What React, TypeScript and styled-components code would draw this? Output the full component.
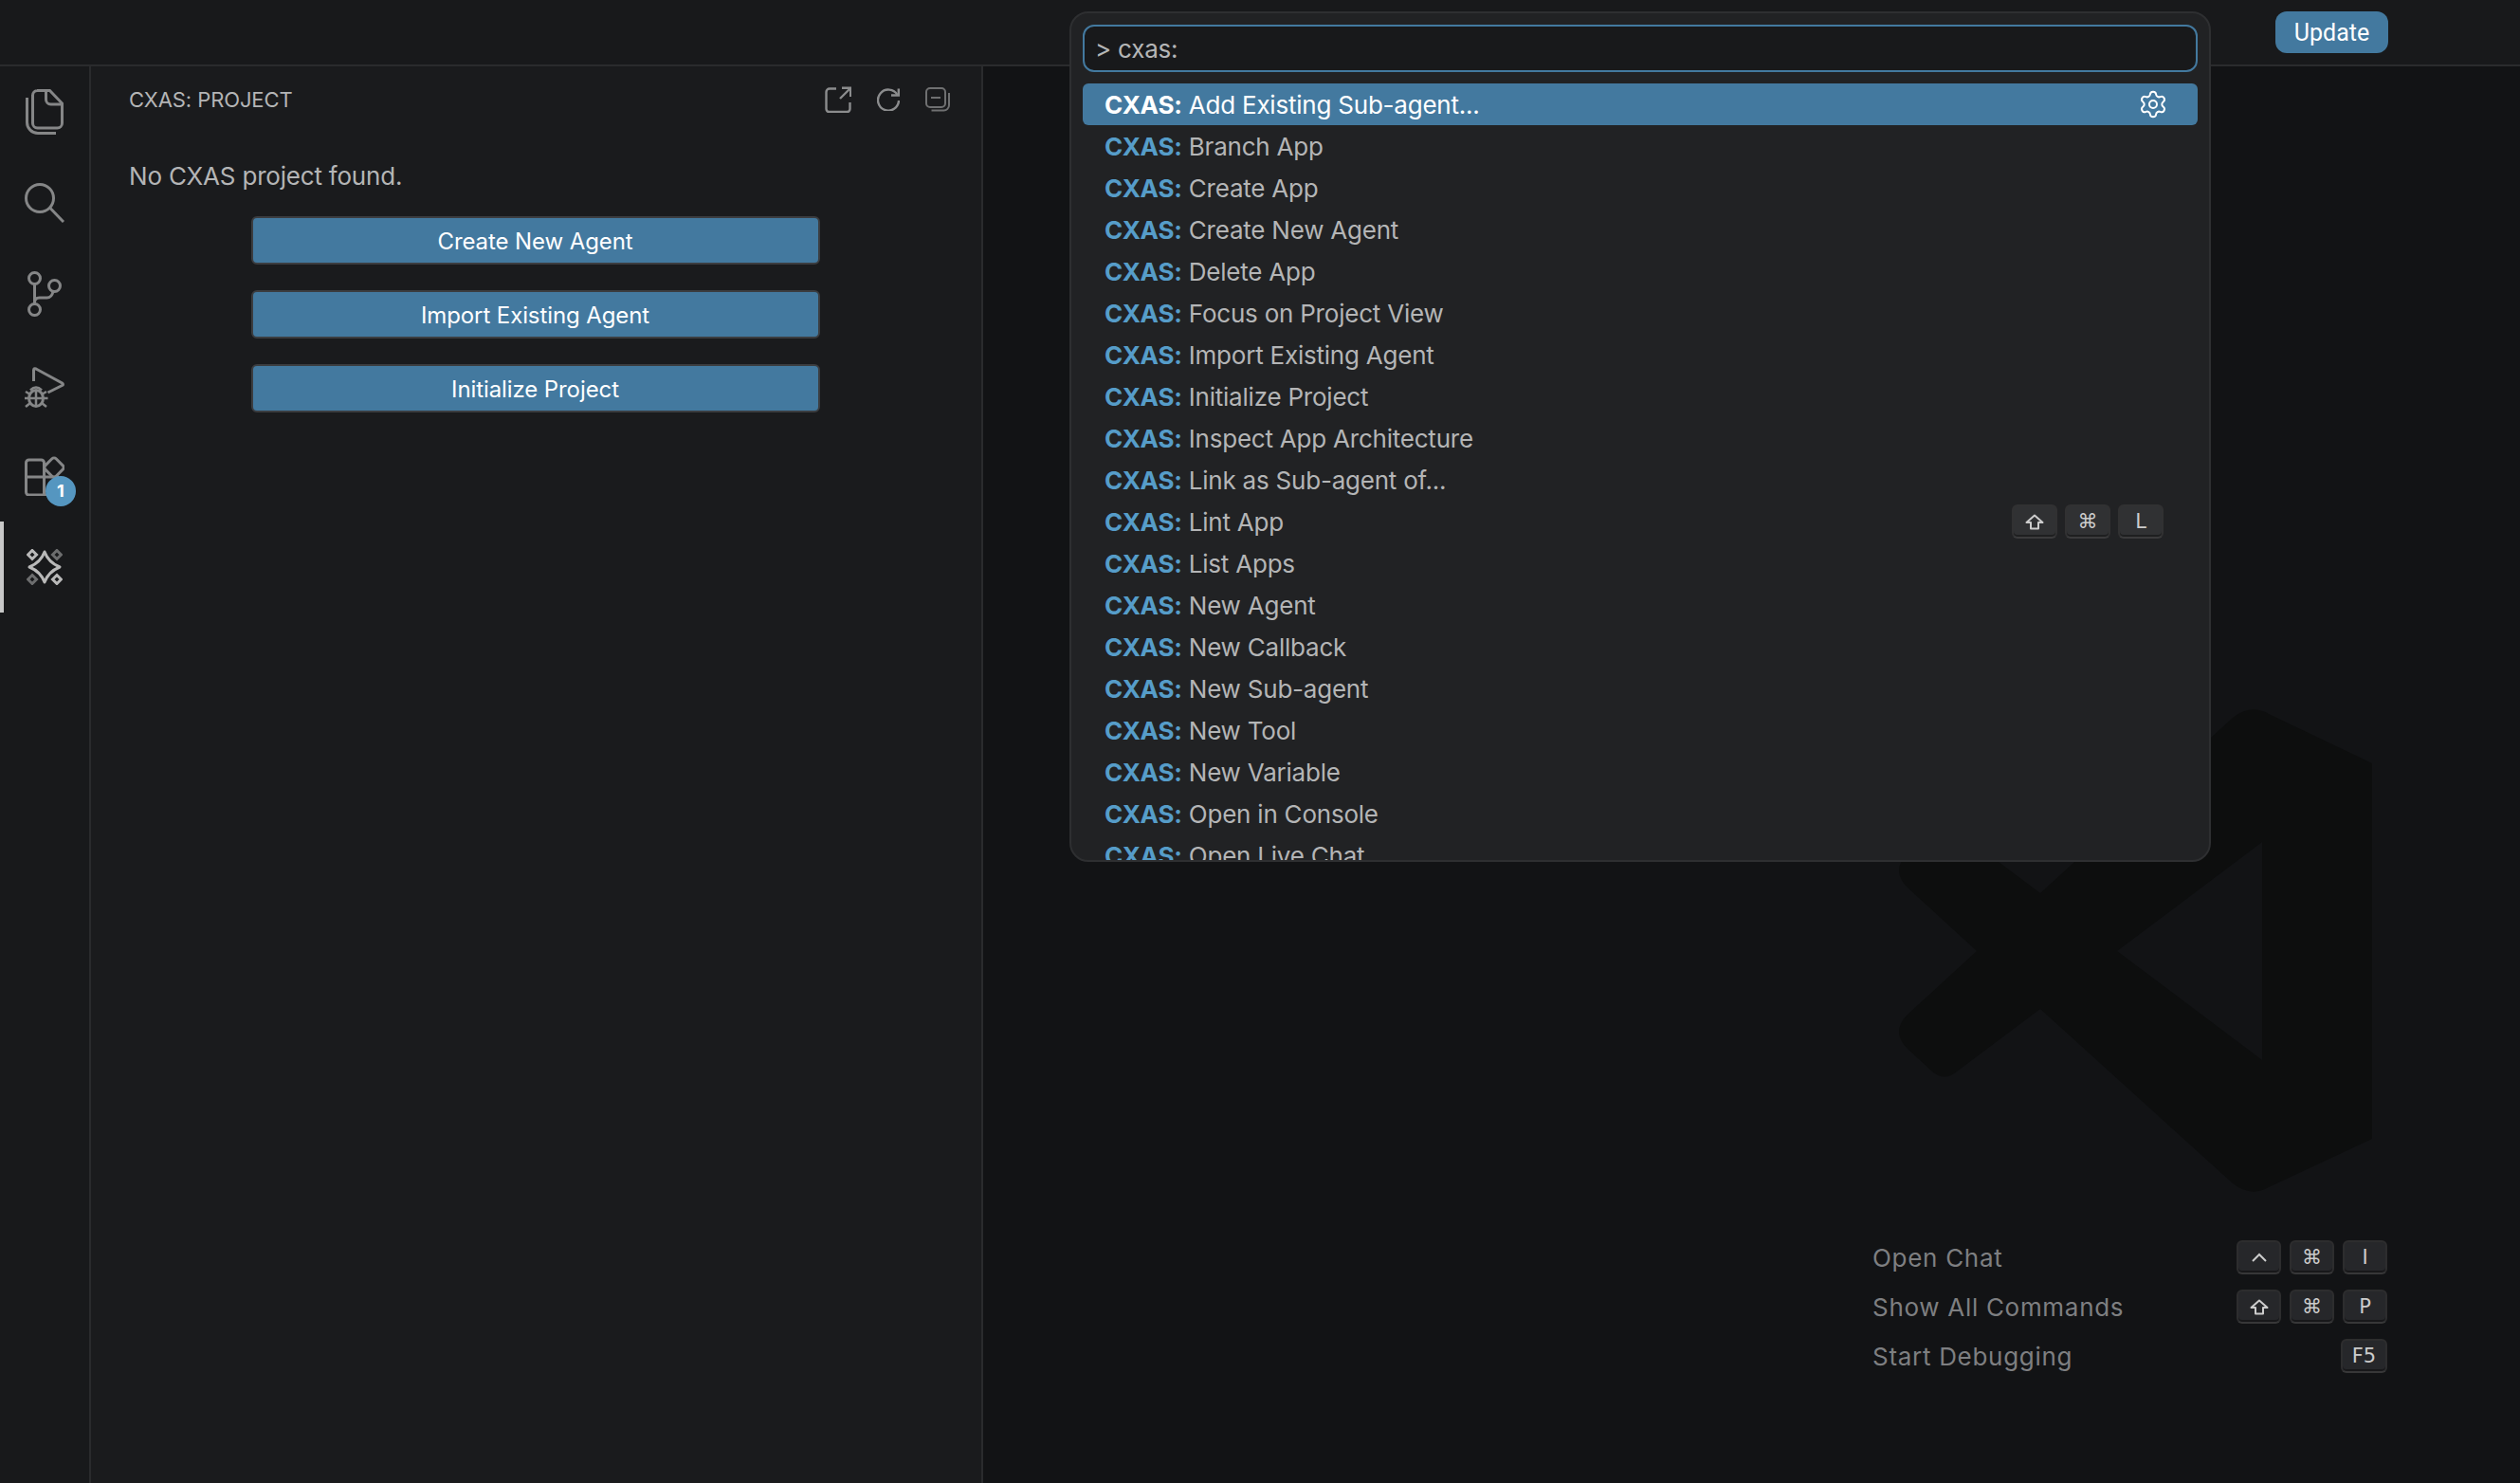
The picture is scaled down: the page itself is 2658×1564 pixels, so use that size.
import * as React from "react";
import styled, { createGlobalStyle } from "styled-components";
import { Settings } from "lucide-react";

const GlobalStyle = createGlobalStyle`
  html, body {
    margin: 0;
    padding: 0;
    background: #121315;
  }
  * {
    box-sizing: border-box;
  }
`;

const commands: { name: string; selected?: boolean; keys?: string[] }[] = [
  { name: "Add Existing Sub-agent...", selected: true },
  { name: "Branch App" },
  { name: "Create App" },
  { name: "Create New Agent" },
  { name: "Delete App" },
  { name: "Focus on Project View" },
  { name: "Import Existing Agent" },
  { name: "Initialize Project" },
  { name: "Inspect App Architecture" },
  { name: "Link as Sub-agent of..." },
  { name: "Lint App", keys: ["shift", "⌘", "L"] },
  { name: "List Apps" },
  { name: "New Agent" },
  { name: "New Callback" },
  { name: "New Sub-agent" },
  { name: "New Tool" },
  { name: "New Variable" },
  { name: "Open in Console" },
  { name: "Open Live Chat" },
];

const shortcuts = [
  { label: "Open Chat", keys: ["ctrl", "⌘", "I"] },
  { label: "Show All Commands", keys: ["shift", "⌘", "P"] },
  { label: "Start Debugging", keys: ["F5"] },
];

const FilesIcon = () => (
  <svg width="40" height="48" viewBox="0 0 40 48" fill="none" stroke="currentColor" strokeWidth="3">
    <path d="M12 1.5h13.500L38.500 15v21a5 5 0 0 1-5 5h-21a5 5 0 0 1-5-5V6.500a5 5 0 0 1 5-5z" />
    <path d="M21.500 1.500V11a5 5 0 0 0 5 5h12" />
    <path d="M1.500 9v26a11.500 11.500 0 0 0 11.500 11.500h19" />
  </svg>
);

const SearchIcon = () => (
  <svg width="42" height="42" viewBox="0 0 42 42" fill="none" stroke="currentColor" strokeWidth="3">
    <circle cx="16" cy="16" r="14.500" />
    <path d="M27 26.500L41 41" />
  </svg>
);

const GitIcon = () => (
  <svg width="36" height="48" viewBox="0 0 36 48" fill="none" stroke="currentColor" strokeWidth="3">
    <circle cx="7.500" cy="7.500" r="6" />
    <circle cx="7.500" cy="40.500" r="6" />
    <circle cx="28.500" cy="15.500" r="6" />
    <path d="M7.500 13.500v21M7.500 33q0-5 5-5h8q5 0 6.500-6.500" />
  </svg>
);

const DebugIcon = () => (
  <svg width="42" height="50" viewBox="0 -6 42 50" fill="none" stroke="currentColor" strokeWidth="3">
    <path d="M9.500 15V3.500q0-2.500 2.500-1.500l27.500 15q2 1.500 0 2.500L24.500 27" />
    <ellipse cx="12" cy="33" rx="7.500" ry="8.500" />
    <path d="M6 24.500q6-6 12 0M4.500 33h15M12 25v16M1 26l5 3M0 33h4.500M1 42l5-4M23 26l-5 3M24.500 33H20M23 42l-5-4" strokeWidth="2.500" />
  </svg>
);

const ExtensionsIcon = () => (
  <svg width="42" height="42" viewBox="0 0 42 42" fill="none" stroke="currentColor" strokeWidth="3">
    <path d="M20.500 22V7a3 3 0 0 0-3-3h-13a3 3 0 0 0-3 3v31a3 3 0 0 0 3 3h27a3 3 0 0 0 3-3V22H1.500M20.500 22v19" />
    <rect x="23" y="4" width="16" height="16" rx="3" transform="rotate(45 31 12)" />
  </svg>
);

const AgentIcon = () => (
  <svg width="38" height="38" viewBox="0 0 38 38" fill="none" stroke="currentColor" strokeWidth="3">
    <path d="M19 3Q23 14 35 19Q23 24 19 35Q15 24 3 19Q15 14 19 3Z" strokeLinejoin="round" />
    <path d="M6 1.500L10.500 6L6 10.500L1.500 6Z" />
    <path d="M32 27.500L36.500 32L32 36.500L27.500 32Z" />
    <path d="M32 1.500L36.500 6L32 10.500L27.500 6Z" stroke="#6c6d6e" />
    <path d="M6 27.500L10.500 32L6 36.500L1.500 32Z" stroke="#6c6d6e" />
  </svg>
);

const OpenIcon = () => (
  <svg width="28" height="28" viewBox="0 0 28 28" fill="none" stroke="currentColor" strokeWidth="2.400">
    <path d="M12 2.500H5a3.500 3.500 0 0 0-3.500 3.500v18a3 3 0 0 0 3 3h19a3 3 0 0 0 3-3v-7" />
    <path d="M16 13L27 2M18 1.700h9.200V11" />
  </svg>
);

const RefreshIcon = () => (
  <svg width="24" height="24" viewBox="0 0 24 24" fill="none" stroke="currentColor" strokeWidth="2.400">
    <path d="M21.500 7a11 11 0 1 0 1.500 6" />
    <path d="M22.800 0.500V7.500H15" />
  </svg>
);

const CollapseIcon = () => (
  <svg width="26" height="26" viewBox="0 0 26 26" fill="none" stroke="currentColor" strokeWidth="2">
    <rect x="1" y="1" width="20" height="20" rx="4" />
    <path d="M6 11h10" />
    <path d="M25 6v13a5.500 5.500 0 0 1-5.500 5.500H6.500" />
  </svg>
);

const ShiftGlyph = () => (
  <svg width="20" height="17" viewBox="0 0 20 17" fill="none" stroke="currentColor" strokeWidth="2" strokeLinejoin="round">
    <path d="M10 1.500L18.500 9H14v6.500H6V9H1.500Z" />
  </svg>
);

const CtrlGlyph = () => (
  <svg width="16" height="10" viewBox="0 0 16 10" fill="none" stroke="currentColor" strokeWidth="2">
    <path d="M1 9L8 2L15 9" />
  </svg>
);

const VsCodeMark = () => (
  <svg width="500" height="509" viewBox="0 0 500 509" fill="#0d0e0e">
    <path
      fillRule="evenodd"
      d="M353 9Q372 -6 391 5L500 57V453L391 504Q372 515 353 500L150 316L62 382Q49 393 36 382L10 358Q-8 340 10 322L83 255L10 188Q-8 170 10 152L36 128Q49 117 62 128L150 194ZM384 140L231 255L384 370Z"
    />
  </svg>
);

const KeyCap = ({ name, row }: { name: string; row?: boolean }) => (
  <Key $wide={name === "F5"} $row={row}>
    {name === "shift" ? <ShiftGlyph /> : name === "ctrl" ? <CtrlGlyph /> : name}
  </Key>
);

const App = () => (
  <>
    <GlobalStyle />
    <Window>
      <TitleBar>
        <UpdateButton>Update</UpdateButton>
      </TitleBar>
      <Body>
        <ActivityBar>
          <ActivityItem><FilesIcon /></ActivityItem>
          <ActivityItem><SearchIcon /></ActivityItem>
          <ActivityItem><GitIcon /></ActivityItem>
          <ActivityItem><DebugIcon /></ActivityItem>
          <ActivityItem>
            <ExtensionsIcon />
            <Badge>1</Badge>
          </ActivityItem>
          <ActivityItem $active><AgentIcon /></ActivityItem>
        </ActivityBar>
        <Sidebar>
          <SidebarHeader>
            <SidebarTitle>CXAS: PROJECT</SidebarTitle>
            <HeaderActions>
              <HeaderAction><OpenIcon /></HeaderAction>
              <HeaderAction><RefreshIcon /></HeaderAction>
              <HeaderAction $dim><CollapseIcon /></HeaderAction>
            </HeaderActions>
          </SidebarHeader>
          <EmptyMessage>No CXAS project found.</EmptyMessage>
          <ButtonStack>
            <WelcomeButton>Create New Agent</WelcomeButton>
            <WelcomeButton>Import Existing Agent</WelcomeButton>
            <WelcomeButton>Initialize Project</WelcomeButton>
          </ButtonStack>
        </Sidebar>
        <Editor>
          <Watermark>
            <VsCodeMark />
          </Watermark>
          <ShortcutList>
            {shortcuts.map((s) => (
              <ShortcutRow key={s.label}>
                <ShortcutLabel>{s.label}</ShortcutLabel>
                <KeyGroup>
                  {s.keys.map((k) => (
                    <KeyCap key={k} name={k} />
                  ))}
                </KeyGroup>
              </ShortcutRow>
            ))}
          </ShortcutList>
        </Editor>
      </Body>
      <QuickInput>
        <InputBox>&gt; cxas:</InputBox>
        <CommandList>
          {commands.map((c) => (
            <CommandRow key={c.name} $selected={c.selected}>
              <CommandLabel>
                <Highlight $selected={c.selected}>CXAS:</Highlight> {c.name}
              </CommandLabel>
              {c.selected && (
                <GearSlot>
                  <Settings size={32} strokeWidth={1.500} color="#fff" />
                </GearSlot>
              )}
              {c.keys && (
                <RowKeys>
                  {c.keys.map((k) => (
                    <KeyCap key={k} name={k} row />
                  ))}
                </RowKeys>
              )}
            </CommandRow>
          ))}
        </CommandList>
      </QuickInput>
    </Window>
  </>
);

export default App;

const Window = styled.div`
  position: relative;
  display: flex;
  flex-direction: column;
  width: 2658px;
  height: 1564px;
  overflow: hidden;
  background: #121315;
  font-family: Inter, "Noto Sans", sans-serif;
`;
const TitleBar = styled.header`
  flex-shrink: 0;
  display: flex;
  align-items: center;
  justify-content: flex-end;
  height: 70px;
  padding: 0 139px 0 0;
  background: #18191b;
  border-bottom: 2px solid #2a2b2d;
`;
const UpdateButton = styled.div`
  display: flex;
  align-items: center;
  justify-content: center;
  width: 119px;
  height: 44px;
  background: #43799f;
  border-radius: 12px;
  color: #fff;
  font-family: Roboto, Inter, sans-serif;
  font-size: 25px;
`;
const Body = styled.div`
  flex: 1;
  display: flex;
  min-height: 0;
`;
const ActivityBar = styled.nav`
  flex-shrink: 0;
  width: 96px;
  background: #18191b;
  border-right: 2px solid #2a2b2d;
`;
const ActivityItem = styled.div<{ $active?: boolean }>`
  position: relative;
  display: flex;
  align-items: center;
  justify-content: center;
  height: 96px;
  color: ${(p) => (p.$active ? "#b9b9b9" : "#858687")};
  box-shadow: ${(p) => (p.$active ? "inset 4px 0 0 #c8c8c8" : "none")};
`;
const Badge = styled.span`
  position: absolute;
  left: 48px;
  top: 48px;
  width: 32px;
  height: 32px;
  border-radius: 50%;
  background: #5596c0;
  color: #fff;
  font-size: 18px;
  font-weight: 700;
  line-height: 32px;
  text-align: center;
`;
const Sidebar = styled.aside`
  flex-shrink: 0;
  width: 941px;
  background: #1a1b1d;
  border-right: 2px solid #2a2b2d;
`;
const SidebarHeader = styled.div`
  display: flex;
  align-items: center;
  justify-content: space-between;
  height: 70px;
  padding: 0 33px 0 40px;
`;
const SidebarTitle = styled.h2`
  margin: 0;
  color: #b4b5b6;
  font-size: 22px;
  font-weight: 400;
  letter-spacing: -0.1px;
`;
const HeaderActions = styled.div`
  display: flex;
  align-items: center;
  gap: 27px;
`;
const HeaderAction = styled.span<{ $dim?: boolean }>`
  display: flex;
  color: ${(p) => (p.$dim ? "#6f7071" : "#8b8c8d")};
`;
const EmptyMessage = styled.p`
  margin: 0;
  padding: 30px 40px 0;
  color: #b4b5b6;
  font-size: 26px;
  line-height: 32px;
  letter-spacing: -0.2px;
`;
const ButtonStack = styled.div`
  display: flex;
  flex-direction: column;
  align-items: center;
  gap: 27px;
  margin-top: 26px;
  padding-right: 2px;
`;
const WelcomeButton = styled.div`
  display: flex;
  align-items: center;
  justify-content: center;
  width: 600px;
  height: 51px;
  padding-top: 2px;
  background: #43799f;
  border: 2px solid #3b3d40;
  border-radius: 6px;
  color: #fff;
  font-size: 24px;
  letter-spacing: -0.1px;
`;
const Editor = styled.main`
  flex: 1;
  display: flex;
  flex-direction: column;
  align-items: flex-end;
  padding: 678px 140px 0 0;
  background: #121315;
`;
const Watermark = styled.div`
  display: flex;
  margin-right: 16px;
`;
const ShortcutList = styled.div`
  display: flex;
  flex-direction: column;
  gap: 16px;
  width: 543px;
  margin-top: 51px;
`;
const ShortcutRow = styled.div`
  display: flex;
  align-items: center;
  justify-content: space-between;
  height: 36px;
`;
const ShortcutLabel = styled.span`
  color: #7e7f81;
  font-size: 26px;
  letter-spacing: 0.7px;
`;
const KeyGroup = styled.div`
  display: flex;
  gap: 9px;
`;
const Key = styled.kbd<{ $wide?: boolean; $row?: boolean }>`
  display: flex;
  align-items: center;
  justify-content: center;
  width: ${(p) => (p.$wide ? "49px" : p.$row ? "48px" : "47px")};
  height: 36px;
  background: ${(p) => (p.$row ? "#303133" : "#26272a")};
  border: 2px solid rgba(51, 51, 51, 0.6);
  border-bottom-color: rgba(68, 68, 68, 0.6);
  border-radius: 6px;
  box-shadow: inset 0 -2px 0 rgba(0, 0, 0, 0.36);
  color: #cccccc;
  font-family: "DejaVu Sans", Inter, sans-serif;
  font-size: 21px;
  line-height: 1;
`;
const QuickInput = styled.section`
  position: absolute;
  left: 1128px;
  top: 12px;
  display: flex;
  flex-direction: column;
  width: 1204px;
  height: 897px;
  padding: 12px 12px 0;
  background: #212224;
  border: 2px solid #2e2f31;
  border-radius: 20px;
  overflow: hidden;
`;
const InputBox = styled.div`
  flex-shrink: 0;
  display: flex;
  align-items: center;
  height: 50px;
  padding: 0 11px;
  background: #18191b;
  border: 2px solid #43799f;
  border-radius: 12px;
  color: #b4b5b6;
  font-size: 26px;
  letter-spacing: -0.2px;
`;
const CommandList = styled.div`
  flex: 1;
  min-height: 0;
  margin-top: 12px;
  overflow: hidden;
`;
const CommandRow = styled.div<{ $selected?: boolean }>`
  display: flex;
  align-items: center;
  justify-content: space-between;
  height: 44px;
  padding: 0 22px 0 23px;
  background: ${(p) => (p.$selected ? "#43799f" : "transparent")};
  border-radius: 6px;
  color: ${(p) => (p.$selected ? "#fff" : "#b4b5b6")};
  font-size: 26px;
  letter-spacing: -0.22px;
`;
const CommandLabel = styled.span`
  white-space: nowrap;
`;
const Highlight = styled.strong<{ $selected?: boolean }>`
  color: ${(p) => (p.$selected ? "#fff" : "#569dc9")};
  font-weight: 700;
`;
const GearSlot = styled.span`
  display: flex;
  margin-right: 9px;
`;
const RowKeys = styled.div`
  display: flex;
  gap: 8px;
  margin-right: 14px;
`;
